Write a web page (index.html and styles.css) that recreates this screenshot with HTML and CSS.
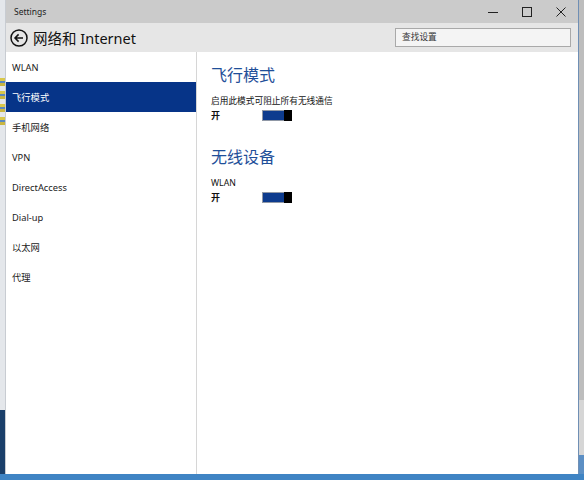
FILE: index.html
```html
<!DOCTYPE html>
<html lang="zh-CN">
<head>
<meta charset="utf-8">
<title>Settings</title>
<link rel="stylesheet" href="styles.css">
</head>
<body>
<div class="desktop">
  <div class="strip-left">
    <span class="dicon"></span><span class="dicon"></span><span class="dicon"></span><span class="dicon"></span>
  </div>
  <div class="window">
    <div class="titlebar">
      <span class="apptitle">Settings</span>
      <div class="controls">
        <span class="ctl"><svg width="12" height="12" viewBox="0 0 12 12"><path d="M1 6.5h10" stroke="#222" stroke-width="1"/></svg></span>
        <span class="ctl"><svg width="12" height="12" viewBox="0 0 12 12"><rect x="1.5" y="1.5" width="9" height="9" fill="none" stroke="#222" stroke-width="1"/></svg></span>
        <span class="ctl"><svg width="12" height="12" viewBox="0 0 12 12"><path d="M1.5 1.5l9 9M10.5 1.5l-9 9" stroke="#222" stroke-width="1"/></svg></span>
      </div>
    </div>
    <div class="header">
      <svg class="back" width="18" height="18" viewBox="0 0 18 18"><circle cx="9" cy="9" r="8" fill="none" stroke="#111" stroke-width="1.5"/><path d="M13 9H5.2M8.6 5.4L5 9l3.6 3.6" fill="none" stroke="#111" stroke-width="1.5"/></svg>
      <h1 class="pagetitle">网络和 Internet</h1>
      <div class="search">查找设置</div>
    </div>
    <div class="main">
      <ul class="nav">
        <li>WLAN</li>
        <li class="active">飞行模式</li>
        <li>手机网络</li>
        <li>VPN</li>
        <li>DirectAccess</li>
        <li>Dial-up</li>
        <li>以太网</li>
        <li>代理</li>
      </ul>
      <div class="content">
        <h2 class="section">飞行模式</h2>
        <p class="label">启用此模式可阻止所有无线通信</p>
        <div class="row"><span class="state">开</span><span class="toggle"><span class="thumb"></span></span></div>
        <h2 class="section second">无线设备</h2>
        <p class="label">WLAN</p>
        <div class="row"><span class="state">开</span><span class="toggle"><span class="thumb"></span></span></div>
      </div>
    </div>
  </div>
  <div class="strip-right"></div>
</div>
</body>
</html>
```
FILE: styles.css
```css
* { box-sizing: border-box; }
html, body { margin: 0; padding: 0; }
body {
  width: 584px;
  height: 480px;
  overflow: hidden;
  background: #3f84c4;
  font-family: "Noto Sans", "Noto Sans CJK SC", sans-serif;
  color: #111;
}
.desktop {
  display: flex;
  height: 474px;
}
.strip-left {
  width: 5px;
  background: linear-gradient(to bottom, #e4e7eb 0 410px, #1a3f6a 410px);
  display: flex;
  flex-direction: column;
  gap: 5px;
  padding-top: 78px;
}
.dicon {
  display: block;
  width: 5px;
  height: 8px;
  background: linear-gradient(to bottom, #d9c84a 0 3px, #5a88c0 3px 5px, #c9b640 5px);
}
.strip-right {
  width: 5px;
  background: linear-gradient(to bottom, #bdbdbd 0 400px, #d6d6d6 400px 455px, #5c8fc4 455px);
}
.window {
  width: 574px;
  height: 474px;
  display: flex;
  flex-direction: column;
  background: #fff;
  border-left: 1px solid #c8ccd2;
  border-right: 1px solid #6f8fb5;
}
.titlebar {
  height: 23px;
  background: #cbcbcb;
  display: flex;
  align-items: center;
  justify-content: space-between;
}
.apptitle {
  font-size: 8.5px;
  color: #222;
  padding-left: 8px;
}
.controls {
  display: flex;
  height: 23px;
}
.ctl {
  width: 34px;
  display: flex;
  align-items: center;
  justify-content: center;
}
.header {
  height: 29px;
  background: #e6e6e6;
  display: flex;
  align-items: center;
  padding-left: 4px;
}
.back { flex: none; }
.pagetitle {
  margin: 0 0 0 5px;
  font-size: 14.5px;
  font-weight: normal;
  color: #111;
  line-height: 20px;
}
.search {
  margin-left: auto;
  margin-right: 7px;
  width: 176px;
  height: 19px;
  border: 1px solid #a9a9a9;
  background: #f4f4f4;
  font-size: 8.7px;
  color: #333;
  line-height: 17px;
  padding-left: 6px;
}
.main {
  flex: 1;
  display: flex;
}
.nav {
  list-style: none;
  margin: 0;
  padding: 0;
  width: 191px;
  border-right: 1px solid #d6d6d6;
}
.nav li {
  height: 30px;
  line-height: 29px;
  padding-top: 1px;
  padding-left: 6px;
  font-size: 9.3px;
  color: #1a1a1a;
}
.nav li.active {
  background: #063488;
  color: #fff;
}
.content {
  padding: 13px 0 0 14px;
}
.section {
  margin: 0;
  font-size: 16px;
  line-height: 20px;
  font-weight: normal;
  color: #1f4f99;
}
.section.second { margin-top: 25px; }
.label {
  margin: 10px 0 0;
  font-size: 8.7px;
  line-height: 12px;
  color: #111;
}
.row {
  margin-top: 2px;
  display: flex;
  align-items: center;
  height: 13px;
}
.state {
  width: 51px;
  font-size: 9px;
  font-weight: bold;
  line-height: 12px;
}
.toggle {
  width: 30px;
  height: 11px;
  background: #0d3b8e;
  border: 1px solid #9098a6;
  display: flex;
  justify-content: flex-end;
}
.thumb {
  width: 8px;
  height: 11px;
  margin-top: -1px;
  margin-right: -1px;
  background: #000;
}
```
